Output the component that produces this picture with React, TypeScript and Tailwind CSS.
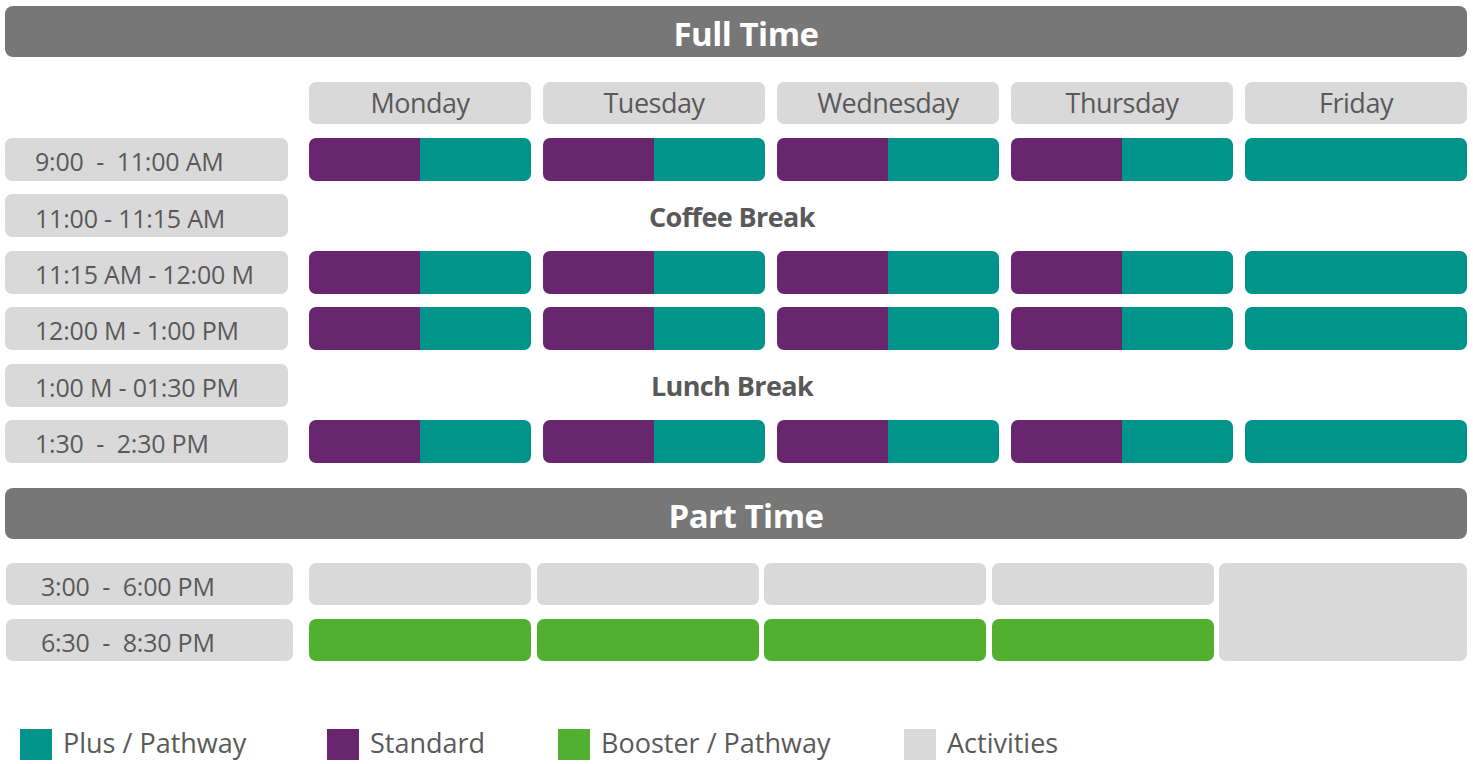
const days = ["Monday", "Tuesday", "Wednesday", "Thursday", "Friday"];

type Row = { time: string; brk?: string };

const fullTime: Row[] = [
  { time: "9:00  -  11:00 AM" },
  { time: "11:00 - 11:15 AM", brk: "Coffee Break" },
  { time: "11:15 AM - 12:00 M" },
  { time: "12:00 M - 1:00 PM" },
  { time: "1:00 M - 01:30 PM", brk: "Lunch Break" },
  { time: "1:30  -  2:30 PM" },
];

const font = { fontFamily: '"Open Sans", "Noto Sans", sans-serif' };

const TimeLabel = ({ text, w, pl }: { text: string; w: string; pl: string }) => (
  <div
    className={`${w} ${pl} h-full bg-[#d9d9d9] rounded-[7px] flex items-center pt-[5px] text-[25px] text-[#595959] whitespace-pre tracking-[-0.2px]`}
  >
    {text}
  </div>
);

const SectionBar = ({ title }: { title: string }) => (
  <div className="h-[51px] bg-[#777777] rounded-[8px] flex items-center justify-center pl-[20px] pt-[4px] text-white text-[33px] font-bold tracking-[-0.5px]">
    {title}
  </div>
);

const Legend = ({ color, label }: { color: string; label: string }) => (
  <div className="flex items-center gap-[11px]">
    <div className={`w-[32px] h-[31px] ${color}`} />
    <span className="text-[27px] text-[#595959] -mt-[2px]">{label}</span>
  </div>
);

export default function App() {
  return (
    <div className="w-[1473px] h-[764px] bg-white pl-[5px] pr-[6px] pt-[6px] overflow-hidden" style={font}>
      <SectionBar title="Full Time" />

      {/* day headers */}
      <div className="mt-[25px] flex h-[42px]">
        <div className="w-[304px] shrink-0" />
        <div className="flex gap-[12px] flex-1">
          {days.map((d) => (
            <div
              key={d}
              className="w-[222px] h-full bg-[#d9d9d9] rounded-[7px] flex items-center justify-center text-[27px] text-[#595959] tracking-[-0.5px]"
            >
              {d}
            </div>
          ))}
        </div>
      </div>

      {/* full time rows */}
      <div className="mt-[14px] flex flex-col gap-[13.4px]">
        {fullTime.map((r) => (
          <div key={r.time} className="flex h-[43px]">
            <TimeLabel text={r.time} w="w-[283px]" pl="pl-[30px]" />
            <div className="w-[21px] shrink-0" />
            {r.brk ? (
              <div className="flex-1 flex items-center pt-[3px]">
                <span className="w-[846px] text-center text-[27px] font-bold text-[#595959] tracking-[-0.6px]">
                  {r.brk}
                </span>
              </div>
            ) : (
              <div className="flex gap-[12px] flex-1">
                {days.map((d, i) =>
                  i < 4 ? (
                    <div key={d} className="w-[222px] h-full rounded-[7px] overflow-hidden flex">
                      <div className="flex-1 bg-[#68266f]" />
                      <div className="flex-1 bg-[#00948a]" />
                    </div>
                  ) : (
                    <div key={d} className="w-[222px] h-full rounded-[7px] bg-[#00948a]" />
                  )
                )}
              </div>
            )}
          </div>
        ))}
      </div>

      <div className="mt-[25px]">
        <SectionBar title="Part Time" />
      </div>

      {/* part time */}
      <div className="mt-[24px] flex h-[98px]">
        <div className="flex flex-col gap-[14px] pl-[1px]">
          <div className="h-[42px]">
            <TimeLabel text="3:00  -  6:00 PM" w="w-[287px]" pl="pl-[35px]" />
          </div>
          <div className="h-[42px]">
            <TimeLabel text="6:30  -  8:30 PM" w="w-[287px]" pl="pl-[35px]" />
          </div>
        </div>
        <div className="w-[16px] shrink-0" />
        <div className="flex flex-col gap-[14px]">
          <div className="flex gap-[5.7px] h-[42px]">
            {[0, 1, 2, 3].map((i) => (
              <div key={i} className="w-[222px] h-full rounded-[7px] bg-[#d9d9d9]" />
            ))}
          </div>
          <div className="flex gap-[5.7px] h-[42px]">
            {[0, 1, 2, 3].map((i) => (
              <div key={i} className="w-[222px] h-full rounded-[7px] bg-[#52b030]" />
            ))}
          </div>
        </div>
        <div className="w-[5px] shrink-0" />
        <div className="flex-1 rounded-[7px] bg-[#d9d9d9]" />
      </div>

      {/* legend */}
      <div className="mt-[64px] flex items-center pl-[15px]">
        <div className="w-[307px]">
          <Legend color="bg-[#00948a]" label="Plus / Pathway" />
        </div>
        <div className="w-[231px]">
          <Legend color="bg-[#68266f]" label="Standard" />
        </div>
        <div className="w-[346px]">
          <Legend color="bg-[#52b030]" label="Booster / Pathway" />
        </div>
        <Legend color="bg-[#d9d9d9]" label="Activities" />
      </div>
    </div>
  );
}
